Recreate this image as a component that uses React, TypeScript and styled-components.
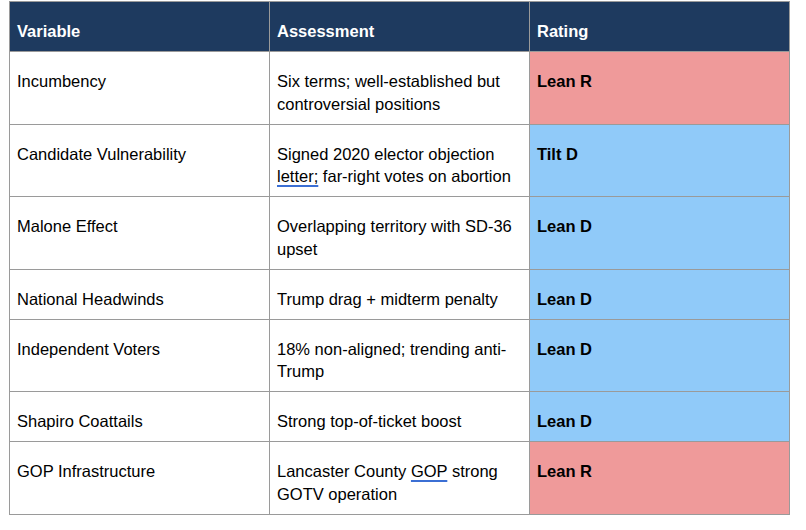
import styled, { createGlobalStyle } from 'styled-components';

const GlobalStyle = createGlobalStyle`
  body {
    margin: 0;
    background: #ffffff;
    font-family: 'Liberation Sans', Arial, sans-serif;
  }
`;

const Page = styled.div`
  padding: 1px 0 0 9px;
`;

const Table = styled.table`
  border-collapse: collapse;
  table-layout: fixed;
  width: 781px;
  font-size: 16.5px;
  color: #000000;
`;

const HeadCell = styled.th`
  background: #1e3a5f;
  color: #ffffff;
  font-weight: 700;
  text-align: left;
  vertical-align: top;
  border: 1px solid #9a9a9a;
  padding: 18px 7px 8.5px;
  line-height: 22.5px;
`;

type Tone = 'plain' | 'red' | 'blue';

const toneColors: Record<Tone, string> = {
  plain: '#ffffff',
  red: '#ef9a9a',
  blue: '#90caf9',
};

const Cell = styled.td<{ $tone?: Tone; $bold?: boolean }>`
  background: ${({ $tone = 'plain' }) => toneColors[$tone]};
  font-weight: ${({ $bold }) => ($bold ? 700 : 400)};
  vertical-align: top;
  border: 1px solid #9a9a9a;
  padding: 18px 7px 8.5px;
  line-height: 22.5px;
`;

const Flagged = styled.span`
  text-decoration: underline;
  text-decoration-color: #3b6fd4;
  text-decoration-thickness: 2px;
  text-underline-offset: 3px;
`;

type Row = {
  variable: string;
  assessment: React.ReactNode;
  rating: string;
  tone: Tone;
};

const rows: Row[] = [
  {
    variable: 'Incumbency',
    assessment: 'Six terms; well-established but controversial positions',
    rating: 'Lean R',
    tone: 'red',
  },
  {
    variable: 'Candidate Vulnerability',
    assessment: (
      <>
        Signed 2020 elector objection <Flagged>letter;</Flagged> far-right votes on abortion
      </>
    ),
    rating: 'Tilt D',
    tone: 'blue',
  },
  {
    variable: 'Malone Effect',
    assessment: 'Overlapping territory with SD-36 upset',
    rating: 'Lean D',
    tone: 'blue',
  },
  {
    variable: 'National Headwinds',
    assessment: 'Trump drag + midterm penalty',
    rating: 'Lean D',
    tone: 'blue',
  },
  {
    variable: 'Independent Voters',
    assessment: '18% non-aligned; trending anti-Trump',
    rating: 'Lean D',
    tone: 'blue',
  },
  {
    variable: 'Shapiro Coattails',
    assessment: 'Strong top-of-ticket boost',
    rating: 'Lean D',
    tone: 'blue',
  },
  {
    variable: 'GOP Infrastructure',
    assessment: (
      <>
        Lancaster County <Flagged>GOP</Flagged> strong GOTV operation
      </>
    ),
    rating: 'Lean R',
    tone: 'red',
  },
];

const App = () => (
  <Page>
    <GlobalStyle />
    <Table>
      <thead>
        <tr>
          <HeadCell>Variable</HeadCell>
          <HeadCell>Assessment</HeadCell>
          <HeadCell>Rating</HeadCell>
        </tr>
      </thead>
      <tbody>
        {rows.map((row) => (
          <tr key={row.variable}>
            <Cell>{row.variable}</Cell>
            <Cell>{row.assessment}</Cell>
            <Cell $tone={row.tone} $bold>
              {row.rating}
            </Cell>
          </tr>
        ))}
      </tbody>
    </Table>
  </Page>
);

export default App;
